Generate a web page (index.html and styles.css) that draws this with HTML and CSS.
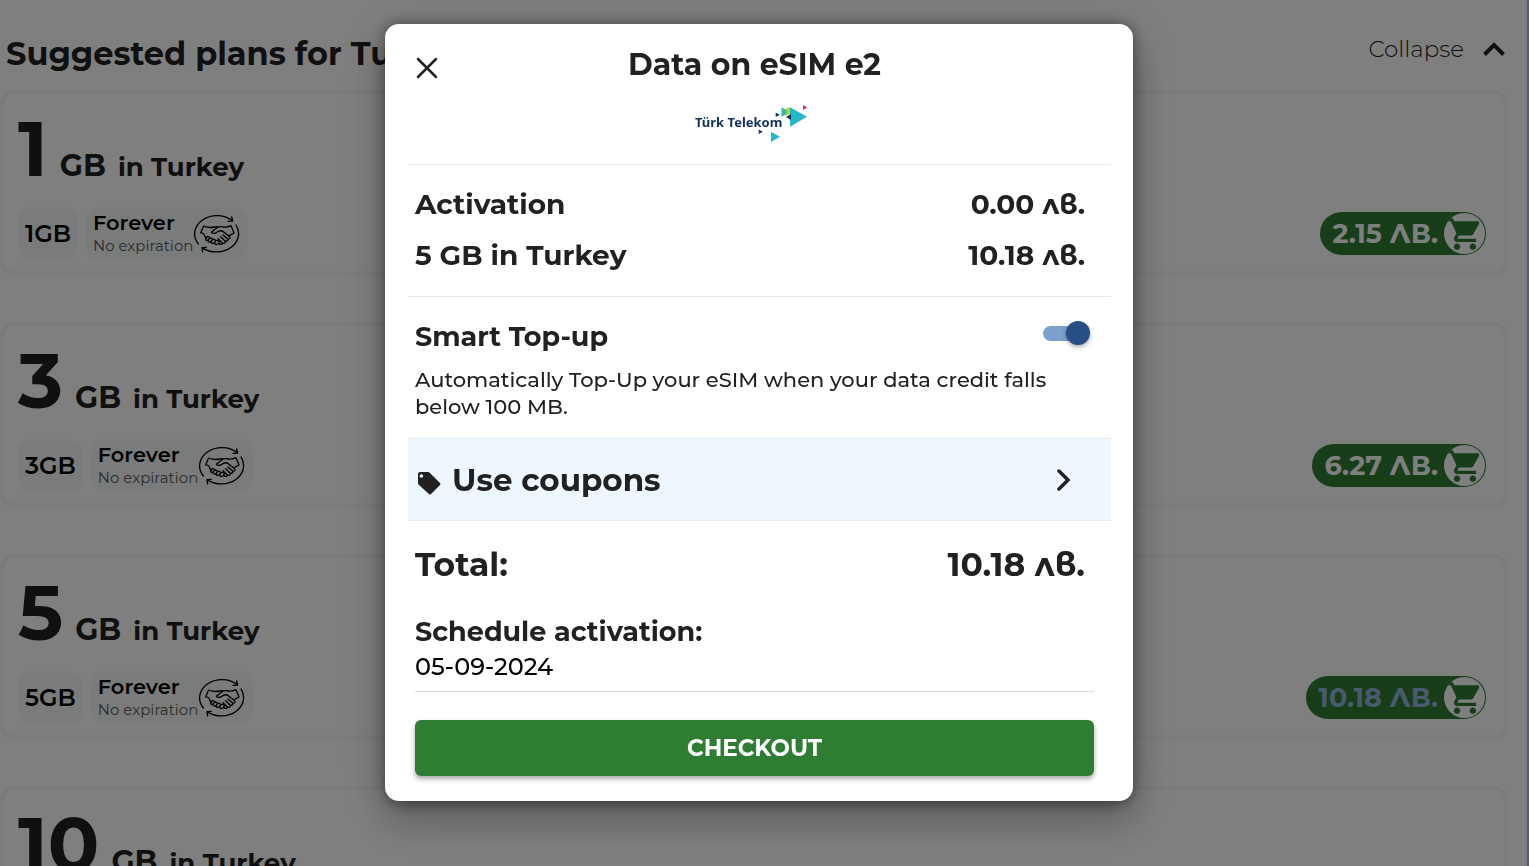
FILE: index.html
```html
<!DOCTYPE html>
<html lang="en">
<head>
<meta charset="utf-8">
<meta name="viewport" content="width=device-width, initial-scale=1">
<title>Data on eSIM e2</title>
<link rel="stylesheet" href="styles.css">
</head>
<body>
<svg class="sprite" aria-hidden="true">
  <symbol id="cart" viewBox="0 0 24 24"><path d="M7 18c-1.1 0-1.99.9-1.99 2S5.9 22 7 22s2-.9 2-2-.9-2-2-2zM1 2v2h2l3.6 7.59-1.35 2.45c-.16.28-.25.61-.25.96 0 1.100.9 2 2 2h12v-2H7.420c-.14 0-.25-.11-.25-.25l.03-.12.9-1.630h7.450c.75 0 1.410-.41 1.750-1.030l3.580-6.490c.08-.14.12-.31.12-.48 0-.55-.45-1-1-1H5.210l-.94-2H1zm16 16c-1.100 0-1.990.9-1.990 2s.89 2 1.990 2 2-.9 2-2-.9-2-2-2z"/></symbol>
  <symbol id="handshake" viewBox="340 58 144 120">
    <g fill="none" stroke="currentColor" stroke-width="4" stroke-linecap="round" stroke-linejoin="round">
      <path d="M356 148A67 55 0 0 1 457 77M469 91A67 55 0 0 1 370 161"/>
      <path d="M456 67l3 12-14 1M369 172l-2-13 13-1"/>
      <path d="M372 94l-9 20 10 4q1 10 8 13M372 94q16 7 32 3l9-1M454 93l9 22-13 7M454 93q-14 7-28 3-8-1-14 3l-17 14q5 6 15 1l8-5q8-2 13 2l19 15q3 7-5 8"/>
      <path d="M381 127q-6 7-1 10 5 2 9-5M389 131q-7 8-1 11 6 2 10-6M398 134q-7 9-1 12 6 2 11-7M408 138q-6 8 0 11 5 2 9-4l3-5M381 127q5-4 9 3M389 131q6-3 10 3M398 134q7-2 10 4M408 138q8-3 11 3"/>
      <path d="M417 147q8 5 12-1M415 132l14 14q8 1 8-6M423 126l14 14q8 0 8-6M430 121l15 13"/>
    </g>
  </symbol>
</svg>

<main class="page">
  <header class="page-head">
    <h1>Suggested plans for Turkey</h1>
    <button class="collapse" type="button">Collapse
      <svg width="24" height="16" viewBox="0 0 24 16" fill="none" stroke="currentColor" stroke-width="4"><path d="M2.500 13.500L12 4l9.500 9.500"/></svg>
    </button>
  </header>

  <section class="plans">
    <article class="plan">
      <h2><span class="amount">1</span> <span class="unit">GB</span> in Turkey</h2>
      <div class="plan-foot">
        <span class="chip size">1GB</span>
        <span class="chip"><span class="term"><b>Forever</b><small>No expiration</small></span><svg width="48" height="40"><use href="#handshake"/></svg></span>
        <button class="buy" type="button" lang="bg">2.15 ЛВ.<span class="cart"><svg width="38" height="38"><use href="#cart"/></svg></span></button>
      </div>
    </article>
    <article class="plan">
      <h2><span class="amount">3</span> <span class="unit">GB</span> in Turkey</h2>
      <div class="plan-foot">
        <span class="chip size">3GB</span>
        <span class="chip"><span class="term"><b>Forever</b><small>No expiration</small></span><svg width="48" height="40"><use href="#handshake"/></svg></span>
        <button class="buy" type="button" lang="bg">6.27 ЛВ.<span class="cart"><svg width="38" height="38"><use href="#cart"/></svg></span></button>
      </div>
    </article>
    <article class="plan">
      <h2><span class="amount">5</span> <span class="unit">GB</span> in Turkey</h2>
      <div class="plan-foot">
        <span class="chip size">5GB</span>
        <span class="chip"><span class="term"><b>Forever</b><small>No expiration</small></span><svg width="48" height="40"><use href="#handshake"/></svg></span>
        <button class="buy active" type="button" lang="bg">10.18 ЛВ.<span class="cart"><svg width="38" height="38"><use href="#cart"/></svg></span></button>
      </div>
    </article>
    <article class="plan">
      <h2><span class="amount">10</span> <span class="unit">GB</span> in Turkey</h2>
    </article>
  </section>
</main>

<div class="overlay">
  <div class="dialog" role="dialog" aria-modal="true" aria-labelledby="dialog-title">
    <header class="dialog-head">
      <button class="close" type="button" aria-label="Close">
        <svg width="22" height="22" viewBox="0 0 22 22" fill="none" stroke="currentColor" stroke-width="2.500" stroke-linecap="round"><path d="M2 2l18 18M20 2L2 20"/></svg>
      </button>
      <h2 id="dialog-title">Data on eSIM e2</h2>
      <svg class="logo" width="120" height="48" viewBox="0 0 120 48" role="img" aria-label="Türk Telekom">
        <text x="0" y="27">Türk Telekom</text>
        <path fill="#22b8c6" d="M95 7.300l17 9.400-17 10zM76 31.700l9 5-9 5.300z"/>
        <path fill="#35b6b0" d="M86.500 7.300l9.200 4.700-9.200 4.700z"/>
        <path fill="#b9d532" d="M90 9l5-2v7l-5 2 2-4z"/>
        <path fill="#12305c" d="M91 17l5-3v6zM80.700 12.500l4 2.200-4 2.200zM63.700 29.500l4 2.200-4 2.200z"/>
        <path fill="#e0344f" d="M108 5l4.200 2.400L108 10z"/>
      </svg>
    </header>

    <section class="lines">
      <p class="row">Activation <span lang="bg">0.00 лв.</span></p>
      <p class="row">5 GB in Turkey <span lang="bg">10.18 лв.</span></p>
    </section>

    <section class="topup">
      <div class="topup-row">
        <label for="smart-topup">Smart Top-up</label>
        <input class="switch" id="smart-topup" type="checkbox" role="switch" checked>
      </div>
      <p>Automatically Top-Up your eSIM when your data credit falls below 100 MB.</p>
    </section>

    <button class="coupons" type="button">
      <svg class="tag" width="24" height="24" viewBox="0 0 24 24" fill="currentColor"><path fill-rule="evenodd" d="M1 3a2 2 0 0 1 2-2h8q1 0 2 1l10 10q1 1 0 2l-9 9q-1 1-2 0L2 14q-1-1-1-2zm5.200 2a1.800 1.800 0 1 0-3.600 0 1.800 1.800 0 0 0 3.600 0z"/></svg>
      <span>Use coupons</span>
      <svg class="chevron" width="14" height="24" viewBox="0 0 14 24" fill="none" stroke="currentColor" stroke-width="3.500" stroke-linecap="round"><path d="M2 3l9 9-9 9"/></svg>
    </button>

    <p class="total">Total: <span lang="bg">10.18 лв.</span></p>

    <form class="schedule">
      <label for="start-date">Schedule activation:</label>
      <input id="start-date" type="text" value="05-09-2024">
      <button class="checkout" type="button">CHECKOUT</button>
    </form>
  </div>
</div>
</body>
</html>
```
FILE: styles.css
```css
* { box-sizing: border-box; }

body {
  margin: 0;
  height: 100vh;
  overflow: hidden;
  background: #fff;
  color: #212121;
  font-family: Montserrat, Inter, "Noto Sans", sans-serif;
}

h1, h2, p { margin: 0; font-weight: 700; }
button, input { font: inherit; color: inherit; }
button { border: 0; padding: 0; background: none; cursor: pointer; }
.sprite { display: none; }

.page {
  height: 100%;
  overflow: hidden;
  padding-right: 19px;
  border-right: 2px solid #b6aee6;
}

.page-head {
  display: flex;
  justify-content: space-between;
  height: 90px;
  padding: 34px 2px 0 6px;
}
.page-head h1 { font-size: 32px; line-height: 40px; }
.collapse {
  display: flex;
  align-items: center;
  gap: 18px;
  height: 30px;
  font-size: 23px;
  font-weight: 300;
}

.plans { display: grid; gap: 47px; }
.plan {
  min-height: 185px;
  padding: 19px 18px 11px 14px;
  border: 4px solid #f7f7f7;
  border-radius: 14px;
}
.plan h2 {
  display: flex;
  align-items: baseline;
  gap: 12px;
  font-size: 26px;
  line-height: 32px;
  white-space: nowrap;
}
.amount { font-size: 76px; line-height: 72px; }
.unit { font-size: 30px; }

.plan-foot {
  display: flex;
  align-items: center;
  gap: 8px;
  margin-top: 22px;
}
.chip {
  display: flex;
  align-items: center;
  height: 53px;
  padding: 0 7px;
  border-radius: 14px;
  background: #f5f9f9;
  color: #000;
}
.size { font-size: 24px; font-weight: 600; }
.term b, .term small { display: block; }
.term b { font-size: 21px; line-height: 24px; font-weight: 600; }
.term small { font-size: 15px; line-height: 22px; font-weight: 400; color: #555; }

.buy {
  display: flex;
  align-items: center;
  gap: 6px;
  height: 43px;
  margin-left: auto;
  padding: 0 1px 0 12px;
  border-radius: 22px;
  background: #2e7d32;
  color: #fff;
  font-size: 27px;
  font-weight: 700;
}
.buy.active { color: #90b4dc; }
.cart {
  display: grid;
  place-items: center;
  width: 41px;
  height: 41px;
  border-radius: 50%;
  overflow: hidden;
  background: #fff;
  color: #2e7d32;
}
.cart svg { fill: currentColor; }

.overlay {
  position: fixed;
  inset: 0;
  display: flex;
  align-items: flex-start;
  justify-content: center;
  padding: 24px 11px 24px 0;
  background: rgba(0, 0, 0, 0.5);
}
.dialog {
  width: 100%;
  max-width: 748px;
  padding: 0 22px 25px 23px;
  border-radius: 14px;
  background: #fff;
  box-shadow: 0 11px 15px -7px rgba(0, 0, 0, 0.2), 0 24px 38px 3px rgba(0, 0, 0, 0.14), 0 9px 46px 8px rgba(0, 0, 0, 0.12), 0 0 16px rgba(0, 0, 0, 0.4);
}

.dialog-head {
  display: grid;
  grid-template-columns: 24px 1fr 24px;
  justify-items: center;
  align-items: center;
  row-gap: 16px;
  padding: 22px 17px 16px 7px;
  border-bottom: 1px solid #e8e8e8;
}
.dialog-head h2 { font-size: 30px; line-height: 38px; }
.close { display: grid; place-items: center; height: 38px; padding-top: 6px; }
.logo { grid-column: 1 / -1; }
.logo text {
  font-family: "Noto Sans", sans-serif;
  font-size: 13px;
  font-weight: 700;
  fill: #12305c;
}

.lines { padding: 14px 26px 15px 7px; border-bottom: 1px solid #e8e8e8; }
.row, .total, .topup-row {
  display: flex;
  align-items: center;
  justify-content: space-between;
}
.row { font-size: 28px; line-height: 51px; }

.topup { padding: 22px 21px 18px 7px; }
.topup-row { font-size: 27px; line-height: 36px; font-weight: 700; }
.topup p { margin-top: 11px; font-size: 21px; line-height: 27px; font-weight: 500; }

.switch {
  appearance: none;
  display: grid;
  align-items: center;
  width: 47px;
  height: 24px;
  margin: 0 0 8px;
}
.switch::before,
.switch::after { content: ""; grid-area: 1 / 1; }
.switch::before {
  width: 40px;
  height: 15px;
  border-radius: 8px;
  background: #7ba0cd;
}
.switch::after {
  justify-self: end;
  width: 24px;
  height: 24px;
  border-radius: 50%;
  background: #264f85;
  box-shadow: 0 2px 4px rgba(0, 0, 0, 0.35);
}

.coupons {
  display: flex;
  align-items: center;
  gap: 11px;
  width: 100%;
  height: 83px;
  padding: 0 40px 0 9px;
  border-top: 1px solid #e4ecf0;
  border-bottom: 1px solid #e4ecf0;
  background: #eef7fe;
  font-size: 31px;
  font-weight: 700;
}
.tag { margin-top: 6px; }
.chevron { margin-left: auto; }

.total { padding: 21px 26px 0 7px; font-size: 33px; line-height: 44px; }

.schedule {
  display: flex;
  flex-direction: column;
  padding: 29px 17px 0 7px;
}
.schedule label { font-size: 27px; line-height: 34px; font-weight: 700; }
.schedule input {
  width: 100%;
  height: 43px;
  padding: 0 0 8px;
  border: 0;
  border-bottom: 1px solid #dcdcdc;
  outline: 0;
  background: none;
  color: #000;
  font-size: 24px;
  font-weight: 500;
}
.checkout {
  height: 56px;
  margin-top: 28px;
  border-radius: 6px;
  background: #2e7d32;
  color: #fff;
  font-size: 23px;
  font-weight: 700;
  box-shadow: 0 3px 5px rgba(0, 0, 0, 0.35);
}
```
